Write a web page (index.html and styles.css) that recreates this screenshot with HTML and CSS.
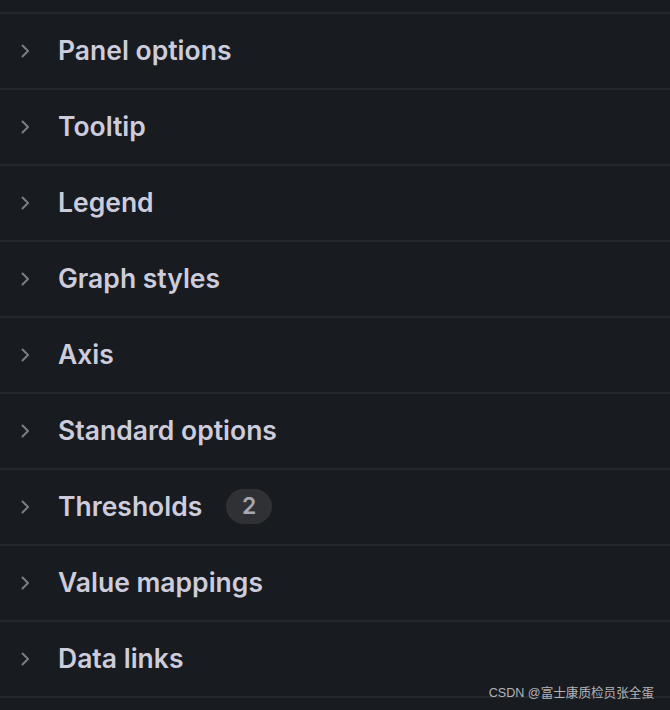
FILE: index.html
```html
<!DOCTYPE html>
<html>
<head>
<meta charset="utf-8">
<link rel="stylesheet" href="styles.css">
</head>
<body>
<div class="pane">
  <div class="lead"></div>
  <div class="row"><svg class="chev" viewBox="0 0 10 14"><path d="M2.5 1.5l5.5 5.5-5.5 5.5"/></svg><span class="title">Panel options</span></div>
  <div class="row"><svg class="chev" viewBox="0 0 10 14"><path d="M2.5 1.5l5.5 5.5-5.5 5.5"/></svg><span class="title">Tooltip</span></div>
  <div class="row"><svg class="chev" viewBox="0 0 10 14"><path d="M2.5 1.5l5.5 5.5-5.5 5.5"/></svg><span class="title">Legend</span></div>
  <div class="row"><svg class="chev" viewBox="0 0 10 14"><path d="M2.5 1.5l5.5 5.5-5.5 5.5"/></svg><span class="title">Graph styles</span></div>
  <div class="row"><svg class="chev" viewBox="0 0 10 14"><path d="M2.5 1.5l5.5 5.5-5.5 5.5"/></svg><span class="title">Axis</span></div>
  <div class="row"><svg class="chev" viewBox="0 0 10 14"><path d="M2.5 1.5l5.5 5.5-5.5 5.5"/></svg><span class="title">Standard options</span></div>
  <div class="row"><svg class="chev" viewBox="0 0 10 14"><path d="M2.5 1.5l5.5 5.5-5.5 5.5"/></svg><span class="title">Thresholds</span><span class="badge">2</span></div>
  <div class="row"><svg class="chev" viewBox="0 0 10 14"><path d="M2.5 1.5l5.5 5.5-5.5 5.5"/></svg><span class="title">Value mappings</span></div>
  <div class="row"><svg class="chev" viewBox="0 0 10 14"><path d="M2.5 1.5l5.5 5.5-5.5 5.5"/></svg><span class="title">Data links</span></div>
  <div class="tail"></div>
  <div class="watermark">CSDN @富士康质检员张全蛋</div>
</div>
</body>
</html>
```
FILE: styles.css
```css
html, body {
  margin: 0;
  padding: 0;
  background: #181b1f;
  overflow: hidden;
}
.pane {
  position: relative;
  width: 670px;
  height: 710px;
  background: #181b1f;
  font-family: Inter, "Noto Sans", sans-serif;
}
.lead {
  height: 12px;
}
.row {
  box-sizing: border-box;
  height: 76px;
  border-top: 2px solid #24272c;
  display: flex;
  align-items: center;
  padding-left: 20px;
  padding-bottom: 2px;
}
.tail {
  border-top: 2px solid #24272c;
  height: 12px;
}
.chev {
  width: 10px;
  height: 14px;
  fill: none;
  stroke: #7b7d86;
  stroke-width: 2;
  stroke-linecap: round;
  stroke-linejoin: round;
  margin-top: 2px;
  margin-right: 28px;
}
.title {
  color: #ccccdc;
  font-size: 26.5px;
  font-weight: 600;
}
.badge {
  margin-left: 24px;
  height: 35px;
  min-width: 46px;
  border-radius: 18px;
  background: #2f3135;
  color: #a6a7b0;
  font-size: 23px;
  font-weight: 600;
  display: inline-flex;
  align-items: center;
  justify-content: center;
}
.watermark {
  position: absolute;
  right: 16px;
  bottom: 9px;
  color: #b3b3b8;
  font-family: "Liberation Sans", "Noto Sans CJK SC", sans-serif;
  font-size: 12.6px;
}
```
